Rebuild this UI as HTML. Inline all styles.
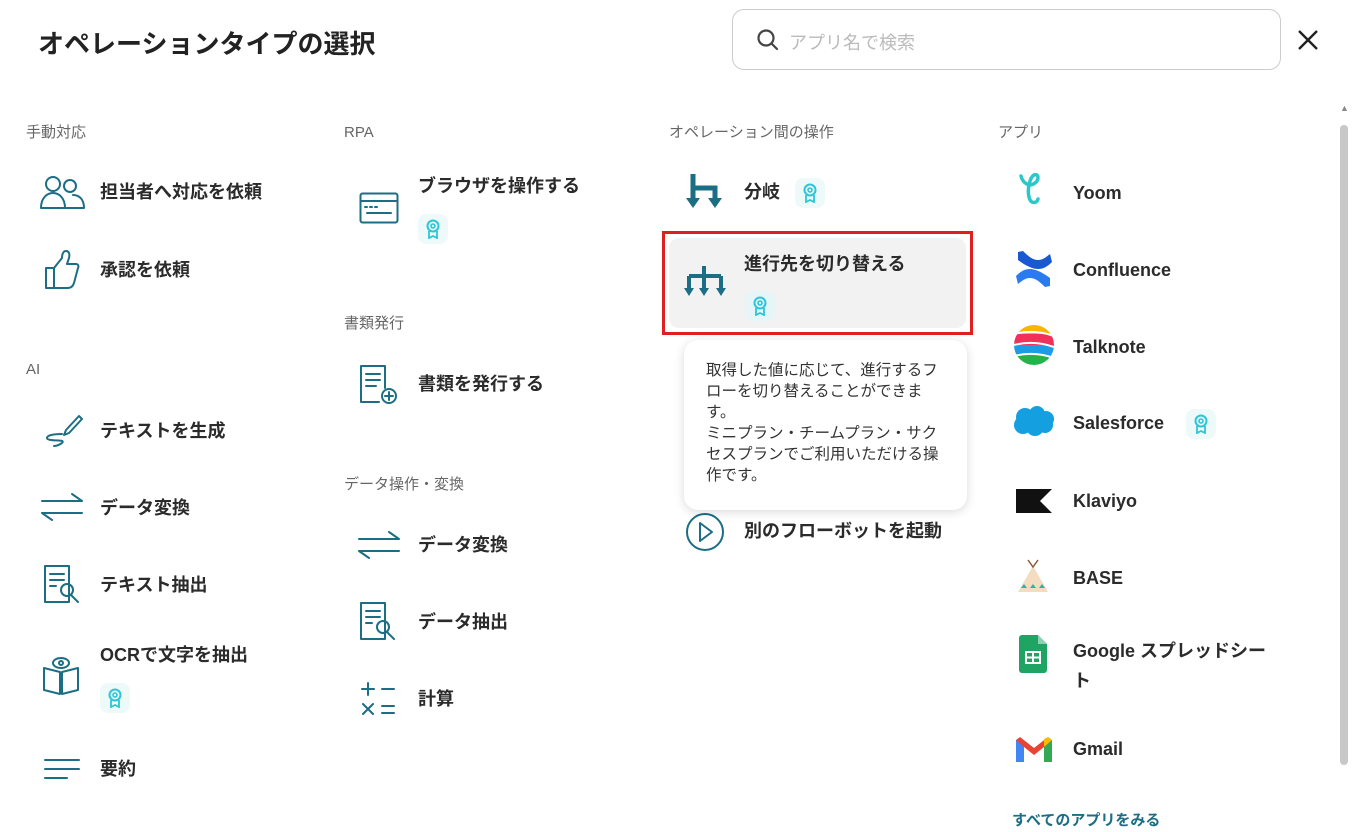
<!DOCTYPE html>
<html><head><meta charset="utf-8"><style>
*{margin:0;padding:0;box-sizing:border-box}
body{width:1352px;height:832px;background:#fff;position:relative;overflow:hidden;font-family:"Liberation Sans","Noto Sans CJK JP",sans-serif;color:#2b2b2b}
.a{position:absolute}
.t{position:absolute;font-size:18px;font-weight:bold;color:#2b2b2b;white-space:nowrap;line-height:24px}
.h{position:absolute;font-size:15px;color:#666;line-height:20px}
.b{position:absolute;width:30px;height:30px;border-radius:8px;background:#eef9fa}
.b svg{position:absolute;left:7px;top:5px}
svg.i{position:absolute}
.i *{fill:none;stroke:#1c6e84;stroke-width:2;stroke-linecap:round;stroke-linejoin:round}
</style></head><body>
<div class="a" style="left:38px;top:24px;font-size:26px;font-weight:bold;color:#222">オペレーションタイプの選択</div>
<div class="a" style="left:732px;top:9px;width:549px;height:61px;border:1px solid #ccc;border-radius:12px"></div>
<svg class="a" style="left:756px;top:28px" width="24" height="24"><circle cx="10" cy="10" r="7.5" fill="none" stroke="#444" stroke-width="2.2"/><path d="M15.5 15.5L21 21" stroke="#444" stroke-width="2.2" stroke-linecap="round"/></svg>
<div class="a" style="left:789px;top:29px;font-size:18px;color:#bbb">アプリ名で検索</div>
<svg class="a" style="left:1297px;top:29px" width="22" height="22"><path d="M2 2L20 20M20 2L2 20" stroke="#222" stroke-width="2.4"/></svg>
<div class="a" style="left:1340px;top:125px;width:8px;height:640px;background:#c8c8c8;border-radius:4px"></div>
<div class="a" style="left:1340px;top:103px;font-size:9px;color:#888">▲</div>

<!-- col1 -->
<div class="h" style="left:26px;top:123px">手動対応</div>
<svg class="i" style="left:40px;top:174px" width="46" height="36"><circle cx="13" cy="10" r="7"/><circle cx="30" cy="12" r="6"/><path d="M1 34c0-10 6-15 12-15s12 5 12 15z"/><path d="M26 34h18c0-9-5-13-11-13"/></svg>
<div class="t" style="left:100px;top:180px">担当者へ対応を依頼</div>
<svg class="i" style="left:44px;top:250px" width="36" height="40"><path d="M2 18h8v20H2z"/><path d="M10 18l8-10c0-5 2-7 4-7 3 0 4 3 3 7l-2 6h9c2 0 3 2 2 4l-4 15c-1 3-3 5-6 5H10"/></svg>
<div class="t" style="left:100px;top:258px">承認を依頼</div>
<div class="h" style="left:26px;top:360px">AI</div>
<svg class="i" style="left:44px;top:410px" width="40" height="38"><path d="M22 20l13-14 3 3-13 14-5 2z"/><path d="M18 24c-8 0-15 1-15 4s12 2 15 3-4 5-8 5"/></svg>
<div class="t" style="left:100px;top:419px">テキストを生成</div>
<svg class="i" style="left:40px;top:492px" width="44" height="30"><path d="M2 9h40M32 2l10 7M42 21H2M12 28L2 21"/></svg>
<div class="t" style="left:100px;top:496px">データ変換</div>
<svg class="i" style="left:43px;top:564px" width="40" height="40"><path d="M2 2h24v36H2z"/><path d="M7 10h14M7 16h14M7 22h6"/><circle cx="24" cy="26" r="6"/><path d="M28 31l7 7"/></svg>
<div class="t" style="left:100px;top:573px">テキスト抽出</div>
<svg class="i" style="left:42px;top:656px" width="40" height="40"><path d="M2 12l16 4v22L2 34zM36 12l-16 4v22l16-4z"/><ellipse cx="19" cy="7" rx="8" ry="5"/><circle cx="19" cy="7" r="2"/></svg>
<div class="t" style="left:100px;top:643px">OCRで文字を抽出</div>
<div class="b" style="left:100px;top:683px"><svg width="16" height="20"><circle cx="8" cy="7" r="5.5" fill="none" stroke="#2cc6d6" stroke-width="2"/><circle cx="8" cy="7" r="2" fill="none" stroke="#2cc6d6" stroke-width="1.6"/><path d="M4 12v7l4-2 4 2v-7" fill="none" stroke="#2cc6d6" stroke-width="1.8"/></svg></div>
<svg class="i" style="left:43px;top:758px" width="38" height="22"><path d="M2 2h34M2 11h34M2 20h22"/></svg>
<div class="t" style="left:100px;top:757px">要約</div>

<!-- col2 -->
<div class="h" style="left:344px;top:123px">RPA</div>
<svg class="i" style="left:359px;top:192px" width="40" height="32"><rect x="1.5" y="1.5" width="37" height="29" rx="2"/><path d="M1.5 9h37M6 15h2M11 15h2M16 15h2M8 21h24"/></svg>
<div class="t" style="left:418px;top:174px">ブラウザを操作する</div>
<div class="b" style="left:418px;top:214px"><svg width="16" height="20"><circle cx="8" cy="7" r="5.5" fill="none" stroke="#2cc6d6" stroke-width="2"/><circle cx="8" cy="7" r="2" fill="none" stroke="#2cc6d6" stroke-width="1.6"/><path d="M4 12v7l4-2 4 2v-7" fill="none" stroke="#2cc6d6" stroke-width="1.8"/></svg></div>
<div class="h" style="left:344px;top:314px">書類発行</div>
<svg class="i" style="left:359px;top:364px" width="40" height="42"><path d="M26 24V2H2v36h18"/><path d="M7 10h14M7 16h14M7 22h10"/><circle cx="30" cy="32" r="7"/><path d="M30 28v8M26 32h8"/></svg>
<div class="t" style="left:418px;top:372px">書類を発行する</div>
<div class="h" style="left:344px;top:475px">データ操作・変換</div>
<svg class="i" style="left:357px;top:530px" width="44" height="30"><path d="M2 9h40M32 2l10 7M42 21H2M12 28L2 21"/></svg>
<div class="t" style="left:418px;top:533px">データ変換</div>
<svg class="i" style="left:359px;top:601px" width="40" height="40"><path d="M2 2h24v36H2z"/><path d="M7 10h14M7 16h14M7 22h6"/><circle cx="24" cy="26" r="6"/><path d="M28 31l7 7"/></svg>
<div class="t" style="left:418px;top:610px">データ抽出</div>
<svg class="i" style="left:360px;top:680px" width="38" height="38"><path d="M2 9h12M8 3v12M22 9h12M3 24l10 10M13 24L3 34M22 26h12M22 33h12"/></svg>
<div class="t" style="left:418px;top:687px">計算</div>

<!-- col3 -->
<div class="h" style="left:669px;top:123px">オペレーション間の操作</div>
<svg class="a" style="left:686px;top:174px" width="38" height="36"><path d="M7 0v28M7 14h22v14" stroke="#1c6e84" stroke-width="5" fill="none"/><path d="M0 24h14L7 34zM22 24h14l-7 10z" fill="#1c6e84"/></svg>
<div class="t" style="left:744px;top:180px">分岐</div>
<div class="b" style="left:795px;top:178px"><svg width="16" height="20"><circle cx="8" cy="7" r="5.5" fill="none" stroke="#2cc6d6" stroke-width="2"/><circle cx="8" cy="7" r="2" fill="none" stroke="#2cc6d6" stroke-width="1.6"/><path d="M4 12v7l4-2 4 2v-7" fill="none" stroke="#2cc6d6" stroke-width="1.8"/></svg></div>
<div class="a" style="left:662px;top:231px;width:311px;height:104px;border:3px solid #e02020"></div>
<div class="a" style="left:669px;top:238px;width:297px;height:90px;background:#f2f2f2;border-radius:10px"></div>
<svg class="a" style="left:684px;top:266px" width="44" height="36"><path d="M20 0v10M5 10h32M5 10v16M20 10v16M37 10v16" stroke="#1c6e84" stroke-width="4" fill="none"/><path d="M0 22h10L5 30zM15 22h10l-5 8zM32 22h10l-5 8z" fill="#1c6e84"/></svg>
<div class="t" style="left:744px;top:252px">進行先を切り替える</div>
<div class="b" style="left:745px;top:291px;background:#e6f6f8"><svg width="16" height="20"><circle cx="8" cy="7" r="5.5" fill="none" stroke="#2cc6d6" stroke-width="2"/><circle cx="8" cy="7" r="2" fill="none" stroke="#2cc6d6" stroke-width="1.6"/><path d="M4 12v7l4-2 4 2v-7" fill="none" stroke="#2cc6d6" stroke-width="1.8"/></svg></div>
<svg class="i" style="left:685px;top:512px" width="40" height="40"><circle cx="20" cy="20" r="18"/><path d="M15 11l12 9-12 9z"/></svg>
<div class="t" style="left:744px;top:519px">別のフローボットを起動</div>
<div class="a" style="left:684px;top:340px;width:283px;height:170px;background:#fff;border-radius:14px;box-shadow:0 2px 10px rgba(0,0,0,.15);padding:20px 22px 0 22px;font-size:15.5px;line-height:21px;color:#333"><div style="width:240px">取得した値に応じて、進行するフローを切り替えることができます。<br>ミニプラン・チームプラン・サクセスプランでご利用いただける操作です。</div></div>

<!-- col4 -->
<div class="h" style="left:998px;top:123px">アプリ</div>
<svg class="a" style="left:1017px;top:172px" width="30" height="42"><path d="M4 4c2 8 9 11 14 7s3-10-1-8-7 14-5 22 8 6 9 2" fill="none" stroke="#2bc7c9" stroke-width="3.5" stroke-linecap="round"/></svg>
<div class="t" style="left:1073px;top:181px">Yoom</div>
<svg class="a" style="left:1014px;top:250px" width="40" height="38"><path d="M4 2l5-1c6 6 10 9 15 9s8-3 12-6l2 8c-5 5-9 7-14 7S12 16 4 10z" fill="#1858d0"/><path d="M36 36l-5 1c-6-6-10-9-15-9s-8 3-12 6l-2-8c5-5 9-7 14-7s12 3 20 9z" fill="#2a7bf0"/></svg>
<div class="t" style="left:1073px;top:258px">Confluence</div>
<svg class="a" style="left:1014px;top:325px" width="40" height="40"><defs><clipPath id="c"><circle cx="20" cy="20" r="20"/></clipPath></defs><g clip-path="url(#c)"><rect width="40" height="9" fill="#f7b500"/><rect y="9" width="40" height="11" fill="#f0325b"/><rect y="20" width="40" height="11" fill="#1e9ae6"/><rect y="31" width="40" height="9" fill="#22b34a"/><path d="M0 9q20-5 40 2M0 20q20-5 40 2M0 31q20-5 40 2" stroke="#fff" stroke-width="2" fill="none"/></g></svg>
<div class="t" style="left:1073px;top:335px">Talknote</div>
<svg class="a" style="left:1013px;top:405px" width="42" height="32"><g fill="#14a0e0"><circle cx="12" cy="12" r="9"/><circle cx="24" cy="9" r="8"/><circle cx="33" cy="14" r="8"/><circle cx="10" cy="20" r="9"/><circle cx="22" cy="22" r="9"/><circle cx="32" cy="20" r="8"/></g></svg>
<div class="t" style="left:1073px;top:411px">Salesforce</div>
<div class="b" style="left:1186px;top:409px"><svg width="16" height="20"><circle cx="8" cy="7" r="5.5" fill="none" stroke="#2cc6d6" stroke-width="2"/><circle cx="8" cy="7" r="2" fill="none" stroke="#2cc6d6" stroke-width="1.6"/><path d="M4 12v7l4-2 4 2v-7" fill="none" stroke="#2cc6d6" stroke-width="1.8"/></svg></div>
<svg class="a" style="left:1016px;top:489px" width="36" height="24"><path d="M0 0h36L24 12l12 12H0z" fill="#111"/></svg>
<div class="t" style="left:1073px;top:489px">Klaviyo</div>
<svg class="a" style="left:1016px;top:558px" width="34" height="38"><path d="M17 8L2 34h30z" fill="#f3dcc0"/><path d="M12 2l5 7 5-7" stroke="#8a5a3a" stroke-width="1.5" fill="none"/><path d="M5 30l3-4 3 4zM14 30l3-4 3 4zM23 30l3-4 3 4z" fill="#2cb5a0"/></svg>
<div class="t" style="left:1073px;top:566px">BASE</div>
<svg class="a" style="left:1019px;top:635px" width="30" height="38"><path d="M0 3a3 3 0 013-3h16l9 9v26a3 3 0 01-3 3H3a3 3 0 01-3-3z" fill="#1fa463"/><path d="M19 0v9h9z" fill="#8ed1b1"/><rect x="7" y="17" width="14" height="11" fill="none" stroke="#fff" stroke-width="2"/><path d="M7 22.5h14M14 17v11" stroke="#fff" stroke-width="2"/></svg>
<div class="t" style="left:1073px;top:636px;line-height:30px;white-space:normal;width:200px">Google スプレッドシート</div>
<svg class="a" style="left:1016px;top:736px" width="36" height="28"><path d="M0 4v22h8V11l10 8 10-8v15h8V4l-4-3-14 11L4 1z" fill="#ea4335"/><path d="M0 4v22h8V11z" fill="#4285f4"/><path d="M28 11v15h8V4z" fill="#34a853"/><path d="M32 1l4 3-8 7V3z" fill="#fbbc04"/></svg>
<div class="t" style="left:1073px;top:737px">Gmail</div>
<div class="a" style="left:1012px;top:809px;font-size:15px;font-weight:bold;color:#1c6e84">すべてのアプリをみる</div>
</body></html>
